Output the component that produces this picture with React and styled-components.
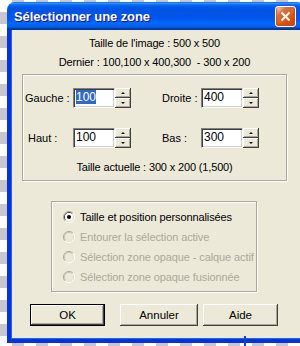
import React from "react";
import styled, { createGlobalStyle, css } from "styled-components";

const GlobalStyle = createGlobalStyle`
  html, body {
    margin: 0;
    height: 100%;
    overflow: hidden;
  }
  body {
    background-color: #ffffff;
    background-image:
      linear-gradient(45deg, #c8c6ce 25%, transparent 25%, transparent 75%, #c8c6ce 75%),
      linear-gradient(45deg, #c8c6ce 25%, transparent 25%, transparent 75%, #c8c6ce 75%);
    background-size: 24px 24px;
    background-position: 0 0, 12px 12px;
    font-family: "Liberation Sans", Arial, sans-serif;
    font-size: 11px;
    color: #000;
  }
`;

const Screen = styled.div`
  position: relative;
  width: 300px;
  height: 346px;
  padding-top: 2px;
  box-sizing: border-box;
  overflow: hidden;
`;

const BackEdge = styled.div`
  position: absolute;
  left: 244px;
  top: 336px;
  width: 2px;
  height: 10px;
  background: #1c3fc8;
`;

const Window = styled.div`
  margin-left: 7px;
  width: 298px;
  flex-shrink: 0;
  display: flex;
  flex-direction: column;
`;

const TitleBar = styled.div`
  height: 28px;
  display: flex;
  align-items: center;
  justify-content: space-between;
  padding: 0 9px 0 7px;
  border-radius: 8px 8px 0 0;
  background: linear-gradient(
    180deg,
    #0058ee 0%,
    #3593ff 4%,
    #288eff 6%,
    #127dff 8%,
    #036ffc 10%,
    #0262ee 14%,
    #0057e5 20%,
    #0054e3 24%,
    #0055eb 56%,
    #005bf5 66%,
    #026afe 76%,
    #0062ef 86%,
    #0052d6 92%,
    #0040ab 94%,
    #003092 100%
  );
`;

const Title = styled.span`
  color: #fff;
  font-weight: bold;
  font-size: 13px;
  letter-spacing: -0.1px;
  text-shadow: 1px 1px #0f1089;
`;

const CloseButton = styled.div`
  width: 21px;
  height: 21px;
  box-sizing: border-box;
  border: 1px solid #fff;
  border-radius: 3px;
  display: flex;
  align-items: center;
  justify-content: center;
  background: radial-gradient(
    circle at 90% 90%,
    #cc4600 0%,
    #dc6527 55%,
    #cd7546 70%,
    #ffccb2 90%,
    #fff 100%
  );
  box-shadow: inset 0 -1px 2px 1px #da4600;
`;

const Client = styled.div`
  height: 302px;
  background: #ece9d8;
  border: 4px solid #0831d9;
  border-top: none;
  box-shadow: inset 1px 0 #166aee, inset -1px 0 #166aee, inset 0 -1px #166aee;
  padding: 7px 14px 0 11px;
  display: flex;
  flex-direction: column;
`;

const InfoLine = styled.div`
  line-height: 13px;
  text-align: center;
  white-space: pre;
  letter-spacing: -0.15px;
  margin-top: ${(p) => (p.$gap ? "6px" : "0")};
`;

const etched = css`
  border: 1px solid #aca899;
  box-shadow: inset 1px 1px #fff, 1px 1px #fff;
`;

const GroupBox = styled.div`
  ${etched};
  margin-top: 5px;
  height: 107px;
  box-sizing: border-box;
  padding: 13px 0 0 2px;
  display: flex;
  flex-direction: column;
`;

const FieldGrid = styled.div`
  display: grid;
  grid-template-columns: 48px 58px 70px 58px;
  grid-auto-rows: 20px;
  row-gap: 20px;
  align-items: center;
`;

const Label = styled.span`
  padding-left: ${(p) => p.$indent || 0}px;
  white-space: pre;
`;

const Summary = styled.div`
  margin-top: 13px;
  line-height: 13px;
  text-align: center;
  letter-spacing: -0.15px;
  padding-right: 2px;
`;

const SpinBox = styled.div`
  display: flex;
  height: 20px;
`;

const TextField = styled.div`
  width: 42px;
  box-sizing: border-box;
  background: #fff;
  border: 1px solid;
  border-color: #808080 #fff #fff #808080;
  box-shadow: inset 1px 1px #404040, inset -1px -1px #d4d0c8;
  padding: 2px 0 0 2px;
  line-height: 13px;
  font-size: 12px;
`;

const Selected = styled.span`
  background: ${(p) => (p.$on ? "#316ac5" : "transparent")};
  color: ${(p) => (p.$on ? "#fff" : "#000")};
`;

const Spinner = styled.div`
  width: 16px;
  display: flex;
  flex-direction: column;
`;

const SpinButton = styled.div`
  flex: 1;
  background: #ece9d8;
  box-shadow: inset -1px -1px #404040, inset 1px 1px #fff, inset -2px -2px #aca899;
  display: flex;
  align-items: center;
  justify-content: center;
`;

const Arrow = styled.span`
  width: 0;
  height: 0;
  border-left: 2px solid transparent;
  border-right: 2px solid transparent;
  ${(p) =>
    p.$dir === "up"
      ? "border-bottom: 2px solid #000;"
      : "border-top: 2px solid #000;"}
`;

const RadioGroup = styled.div`
  ${etched};
  margin: 20px 0 0 29px;
  width: 206px;
  height: 91px;
  box-sizing: border-box;
  padding: 5px 0 0 11px;
  display: flex;
  flex-direction: column;
`;

const RadioRow = styled.div`
  height: 20px;
  display: flex;
  align-items: center;
  gap: 5px;
  white-space: nowrap;
  letter-spacing: -0.1px;
  color: ${(p) => (p.$disabled ? "#aca899" : "#000")};
`;

const ButtonRow = styled.div`
  margin: 12px 0 0 8px;
  display: flex;
`;

const Button = styled.div`
  width: ${(p) => p.$w}px;
  height: 22px;
  margin-left: ${(p) => p.$gap || 0}px;
  box-sizing: border-box;
  display: flex;
  align-items: center;
  justify-content: center;
  background: #ece9d8;
  font-size: 11.5px;
  box-shadow: inset -1px -1px #404040, inset 1px 1px #fff, inset -2px -2px #aca899;
  ${(p) =>
    p.$default &&
    css`
      border: 1px solid #000;
    `}
`;

const RadioIcon = ({ checked, disabled }) => (
  <svg width="12" height="12" viewBox="0 0 12 12">
    <path d="M2.1 9.9 A5.5 5.5 0 0 1 9.9 2.1" fill="none" stroke="#aca899" />
    <path d="M9.9 2.1 A5.5 5.5 0 0 1 2.1 9.9" fill="none" stroke="#fff" />
    <path d="M2.8 9.2 A4.5 4.5 0 0 1 9.2 2.8" fill="none" stroke={disabled ? "#c8c4b4" : "#404040"} />
    <path d="M9.2 2.8 A4.5 4.5 0 0 1 2.8 9.2" fill="none" stroke="#e4e0d0" />
    <circle cx="6" cy="6" r="3.9" fill={disabled ? "#ece9d8" : "#fff"} />
    {checked && <circle cx="6" cy="6" r="2" fill="#000" />}
  </svg>
);

const SpinEdit = ({ value, selected }) => (
  <SpinBox>
    <TextField>
      <Selected $on={selected}>{value}</Selected>
    </TextField>
    <Spinner>
      <SpinButton>
        <Arrow $dir="up" />
      </SpinButton>
      <SpinButton>
        <Arrow $dir="down" />
      </SpinButton>
    </Spinner>
  </SpinBox>
);

const options = [
  { label: "Taille et position personnalisées", checked: true },
  { label: "Entourer la sélection active", disabled: true },
  { label: "Sélection zone opaque - calque actif", disabled: true },
  { label: "Sélection zone opaque fusionnée", disabled: true },
];

export default function App() {
  return (
    <Screen>
      <GlobalStyle />
      <Window>
        <TitleBar>
          <Title>Sélectionner une zone</Title>
          <CloseButton>
            <svg width="11" height="11" viewBox="0 0 11 11">
              <path d="M1.5 1.5 L9.5 9.5 M9.5 1.5 L1.5 9.5" stroke="#fff" strokeWidth="2" />
            </svg>
          </CloseButton>
        </TitleBar>
        <Client>
          <InfoLine>Taille de l'image : 500 x 500</InfoLine>
          <InfoLine $gap>{"Dernier : 100,100 x 400,300  - 300 x 200"}</InfoLine>
          <GroupBox>
            <FieldGrid>
              <Label>Gauche :</Label>
              <SpinEdit value="100" selected />
              <Label $indent={31}>Droite :</Label>
              <SpinEdit value="400" />
              <Label $indent={3}>Haut :</Label>
              <SpinEdit value="100" />
              <Label $indent={31}>{"Bas :"}</Label>
              <SpinEdit value="300" />
            </FieldGrid>
            <Summary>Taille actuelle : 300 x 200 (1,500)</Summary>
          </GroupBox>
          <RadioGroup>
            {options.map((o) => (
              <RadioRow key={o.label} $disabled={o.disabled}>
                <RadioIcon checked={o.checked} disabled={o.disabled} />
                {o.label}
              </RadioRow>
            ))}
          </RadioGroup>
          <ButtonRow>
            <Button $w={75} $default>
              OK
            </Button>
            <Button $w={78} $gap={15}>
              Annuler
            </Button>
            <Button $w={75} $gap={5}>
              Aide
            </Button>
          </ButtonRow>
        </Client>
      </Window>
      <BackEdge />
    </Screen>
  );
}
